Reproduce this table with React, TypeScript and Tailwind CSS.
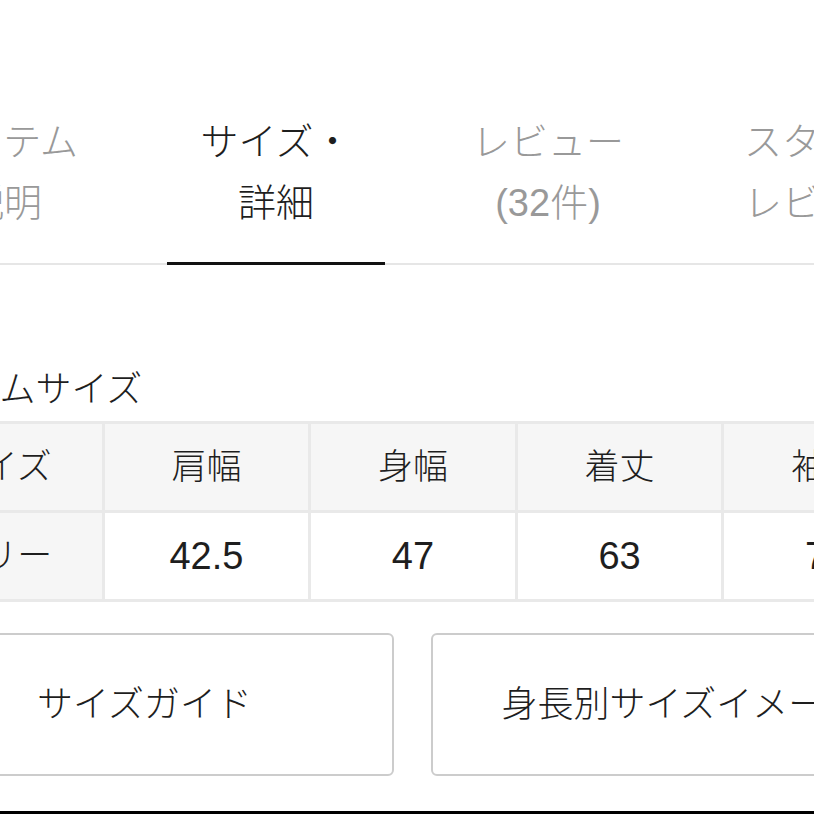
import React from "react";

interface Tab {
  top: string;
  bottom: string;
  active?: boolean;
}

const tabs: Tab[] = [
  { top: "アイテム", bottom: "説明" },
  { top: "サイズ・", bottom: "詳細", active: true },
  { top: "レビュー", bottom: "(32件)" },
  { top: "スタッフ", bottom: "レビュー" },
];

const headers = ["サイズ", "肩幅", "身幅", "着丈", "袖丈"];
const values = ["フリー", "42.5", "47", "63", "78"];

const font = { fontFamily: '"Liberation Sans", "Noto Sans CJK JP", sans-serif' };

const App: React.FC = () => {
  return (
    <div className="w-[814px] h-[814px] overflow-hidden bg-white flex flex-col font-light" style={font}>
      {/* tabs */}
      <div className="pt-[112px] ml-[-132px] w-[1088px] flex items-end border-b-2 border-[#e6e6e6]">
        {tabs.map((tab) => (
          <div key={tab.top} className="w-[272px] flex flex-col -mb-[2px]">
            <div
              className={`text-center text-[38px] leading-[61px] ${
                tab.active ? "text-[#1e1e1e]" : "text-[#999]"
              }`}
            >
              <div>{tab.top}</div>
              <div>{tab.bottom}</div>
            </div>
            <div className={`mt-[28px] h-[3px] mx-[27px] ${tab.active ? "bg-[#111]" : "bg-transparent"}`} />
          </div>
        ))}
      </div>

      <div className="ml-[-105px] w-[1036px] flex flex-col">
        <h2 className="mt-[105px] mb-[11px] text-[36px] leading-[40px] text-[#1e1e1e] font-light">
          アイテムサイズ
        </h2>

        {/* size table */}
        <div className="bg-[#e9e9e9] p-[3px] grid grid-cols-5 gap-[3px]">
          {headers.map((h) => (
            <div
              key={h}
              className="h-[86px] bg-[#f6f6f6] flex items-center justify-center text-[35px] text-[#1e1e1e]"
            >
              {h}
            </div>
          ))}
          {values.map((v, i) => (
            <div
              key={i}
              className={`h-[86px] flex items-center justify-center text-[38px] text-[#1e1e1e] ${
                i === 0 ? "bg-[#f6f6f6]" : "bg-white"
              }`}
            >
              <span className={i === 0 ? "text-[35px]" : ""}>{v}</span>
            </div>
          ))}
        </div>

        {/* buttons */}
        <div className="mt-[31px] flex gap-[37px]">
          <button className="w-[499px] h-[143px] rounded-[6px] border-2 border-[#cccccc] bg-white text-[36px] text-[#1e1e1e]">
            サイズガイド
          </button>
          <button className="w-[499px] h-[143px] rounded-[6px] border-2 border-[#cccccc] bg-white text-[36px] text-[#1e1e1e]">
            身長別サイズイメージ
          </button>
        </div>
      </div>

      <div className="mt-auto h-[3px] bg-black" />
    </div>
  );
};

export default App;
